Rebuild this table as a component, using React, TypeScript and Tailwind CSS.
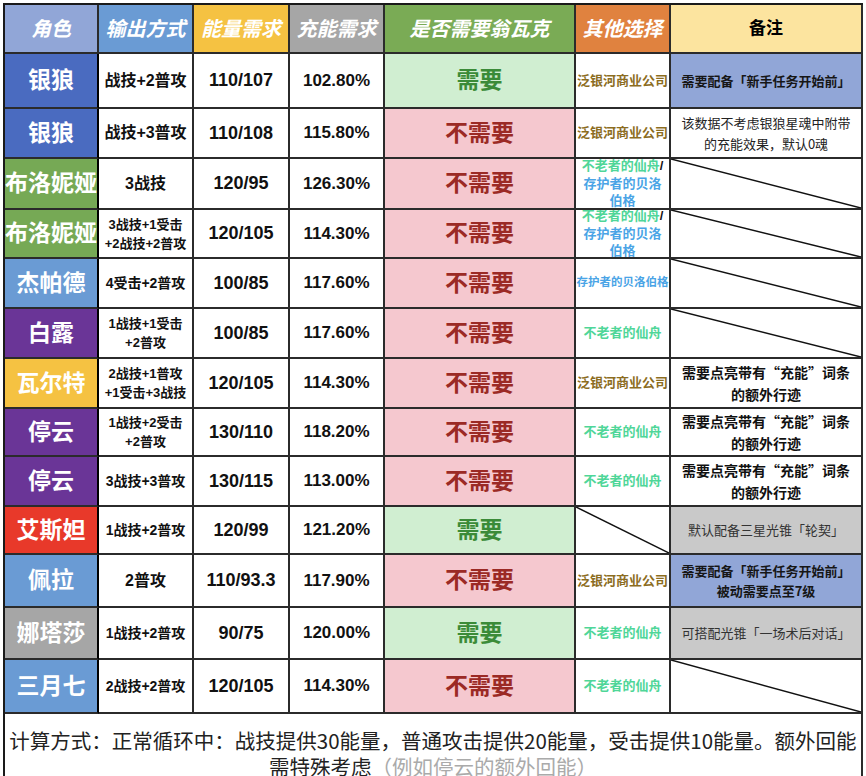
import React from "react";

type Other = { t: string; c: "gold" | "green" | "blue" | "black" }[][];
type Note =
  | { kind: "diag" }
  | { kind: "blue" | "gray" | "plain" | "bold"; lines: string[] };

interface Row {
  name: string;
  color: string;
  out: string[];
  outSize: string;
  energy: string;
  charge: string;
  need: boolean;
  other: Other | null;
  note: Note;
}

const gold = (t: string): Other => [[{ t, c: "gold" }]];
const xianzhou: Other = [[{ t: "不老者的仙舟", c: "green" }]];
const mixed: Other = [
  [
    { t: "不老者的仙舟", c: "green" },
    { t: "/", c: "black" },
  ],
  [{ t: "存护者的贝洛", c: "blue" }],
  [{ t: "伯格", c: "blue" }],
];
const trailblaze: Note = { kind: "bold", lines: ["需要点亮带有“充能”词条", "的额外行迹"] };

const rows: Row[] = [
  { name: "银狼", color: "bg-[#4a6bc0]", out: ["战技+2普攻"], outSize: "text-[16px]", energy: "110/107", charge: "102.80%", need: true, other: gold("泛银河商业公司"), note: { kind: "blue", lines: ["需要配备「新手任务开始前」"] } },
  { name: "银狼", color: "bg-[#4a6bc0]", out: ["战技+3普攻"], outSize: "text-[16px]", energy: "110/108", charge: "115.80%", need: false, other: gold("泛银河商业公司"), note: { kind: "plain", lines: ["该数据不考虑银狼星魂中附带", "的充能效果，默认0魂"] } },
  { name: "布洛妮娅", color: "bg-[#76a955]", out: ["3战技"], outSize: "text-[16px]", energy: "120/95", charge: "126.30%", need: false, other: mixed, note: { kind: "diag" } },
  { name: "布洛妮娅", color: "bg-[#76a955]", out: ["3战技+1受击", "+2战技+2普攻"], outSize: "text-[13px]", energy: "120/105", charge: "114.30%", need: false, other: mixed, note: { kind: "diag" } },
  { name: "杰帕德", color: "bg-[#6a9bd4]", out: ["4受击+2普攻"], outSize: "text-[14px]", energy: "100/85", charge: "117.60%", need: false, other: [[{ t: "存护者的贝洛伯格", c: "blue" }]], note: { kind: "diag" } },
  { name: "白露", color: "bg-[#6a3597]", out: ["1战技+1受击", "+2普攻"], outSize: "text-[13px]", energy: "100/85", charge: "117.60%", need: false, other: xianzhou, note: { kind: "diag" } },
  { name: "瓦尔特", color: "bg-[#f5c242]", out: ["2战技+1普攻", "+1受击+3战技"], outSize: "text-[13px]", energy: "120/105", charge: "114.30%", need: false, other: gold("泛银河商业公司"), note: trailblaze },
  { name: "停云", color: "bg-[#6a3597]", out: ["1战技+2受击", "+2普攻"], outSize: "text-[13px]", energy: "130/110", charge: "118.20%", need: false, other: xianzhou, note: trailblaze },
  { name: "停云", color: "bg-[#6a3597]", out: ["3战技+3普攻"], outSize: "text-[14px]", energy: "130/115", charge: "113.00%", need: false, other: xianzhou, note: trailblaze },
  { name: "艾斯妲", color: "bg-[#e8392a]", out: ["1战技+2普攻"], outSize: "text-[14px]", energy: "120/99", charge: "121.20%", need: true, other: null, note: { kind: "gray", lines: ["默认配备三星光锥「轮契」"] } },
  { name: "佩拉", color: "bg-[#6a9bd4]", out: ["2普攻"], outSize: "text-[16px]", energy: "110/93.3", charge: "117.90%", need: false, other: gold("泛银河商业公司"), note: { kind: "blue", lines: ["需要配备「新手任务开始前」", "被动需要点至7级"] } },
  { name: "娜塔莎", color: "bg-[#a6a6a6]", out: ["1战技+2普攻"], outSize: "text-[14px]", energy: "90/75", charge: "120.00%", need: true, other: xianzhou, note: { kind: "gray", lines: ["可搭配光锥「一场术后对话」"] } },
  { name: "三月七", color: "bg-[#6a9bd4]", out: ["2战技+2普攻"], outSize: "text-[14px]", energy: "120/105", charge: "114.30%", need: false, other: xianzhou, note: { kind: "diag" } },
];

const headers = [
  { label: "角色", cls: "bg-[#91a6d7] text-white italic" },
  { label: "输出方式", cls: "bg-[#6a9bd4] text-white italic" },
  { label: "能量需求", cls: "bg-[#f5c242] text-white italic" },
  { label: "充能需求", cls: "bg-[#a6a6a6] text-white italic" },
  { label: "是否需要翁瓦克", cls: "bg-[#7aab55] text-white italic" },
  { label: "其他选择", cls: "bg-[#e0823f] text-white italic" },
  { label: "备注", cls: "bg-[#fce49f] text-black !text-[17px]" },
];

const colorOf = {
  gold: "text-[#8c6d1f]",
  green: "text-[#4fd698]",
  blue: "text-[#4aa4e6]",
  black: "text-[#111]",
};

const cell = "relative flex items-center justify-center border-r-2 border-b-2 border-[#2b2b2b] overflow-hidden text-center";

const Diagonal = () => (
  <svg className="absolute inset-0 h-full w-full" viewBox="0 0 100 100" preserveAspectRatio="none">
    <line x1="0" y1="0" x2="100" y2="100" stroke="#111" strokeWidth="1.5" vectorEffect="non-scaling-stroke" />
  </svg>
);

const NoteCell = ({ note }: { note: Note }) => {
  if (note.kind === "diag") {
    return (
      <div className={`${cell} bg-white`}>
        <Diagonal />
      </div>
    );
  }
  const styles = {
    blue: "bg-[#91a6d7] text-[#161616] font-bold text-[13px] leading-[20px]",
    gray: "bg-[#c9c9c9] text-[#333] text-[13px] leading-[20px]",
    plain: "bg-white text-[#222] text-[13px] leading-[21px]",
    bold: "bg-white text-[#111] font-bold text-[14px] leading-[22px]",
  }[note.kind];
  return (
    <div className={`${cell} ${styles} flex-col font-['Noto_Sans_CJK_SC',sans-serif]`}>
      {note.lines.map((l) => (
        <span key={l} className="whitespace-nowrap">
          {l}
        </span>
      ))}
    </div>
  );
};

const OtherCell = ({ other }: { other: Other | null }) => {
  if (!other) {
    return (
      <div className={`${cell} bg-white`}>
        <Diagonal />
      </div>
    );
  }
  const small = other.length === 1 && other[0][0].t.length > 7;
  return (
    <div className={`${cell} bg-white flex-col font-bold ${small ? "text-[11.5px]" : "text-[13px]"} leading-[17.5px]`}>
      {other.map((line, i) => (
        <span key={i} className="whitespace-nowrap">
          {line.map((seg) => (
            <span key={seg.t} className={colorOf[seg.c]}>
              {seg.t}
            </span>
          ))}
        </span>
      ))}
    </div>
  );
};

export default function App() {
  return (
    <div className="min-h-[776px] w-[866px] bg-white pl-[3px] pt-[3px] font-['Liberation_Sans','Noto_Sans_CJK_SC',sans-serif]">
      <div className="grid w-[860px] grid-cols-[94px_95px_96px_95px_191px_95px_192px] grid-rows-[49px_55px_50px_51px_49px_50px_50px_50px_48px_50px_48px_53px_52px_54px_63px] border-l-2 border-t-2 border-[#1a1a1a]">
        {headers.map((h) => (
          <div key={h.label} className={`${cell} ${h.cls} text-[20px] font-bold`}>
            {h.label}
          </div>
        ))}

        {rows.map((r, i) => (
          <React.Fragment key={i}>
            <div className={`${cell} ${r.color} border-r-black text-[23px] font-bold text-white whitespace-nowrap`}>
              {r.name}
            </div>
            <div className={`${cell} bg-white flex-col font-bold text-[#111] ${r.outSize} ${r.out.length > 1 ? "leading-[19px]" : ""}`}>
              {r.out.map((l) => (
                <span key={l} className="whitespace-nowrap">
                  {l}
                </span>
              ))}
            </div>
            <div className={`${cell} bg-white text-[18px] font-bold text-[#111]`}>{r.energy}</div>
            <div className={`${cell} bg-white text-[17px] font-bold text-[#111]`}>{r.charge}</div>
            <div
              className={`${cell} text-[23px] font-bold ${
                r.need ? "bg-[#d0eed1] text-[#3b8b38]" : "bg-[#f5c8cf] text-[#9b2a25]"
              }`}
            >
              {r.need ? "需要" : "不需要"}
            </div>
            <OtherCell other={r.other} />
            <NoteCell note={r.note} />
          </React.Fragment>
        ))}

        <div className="col-span-7 border-r-2 border-[#2b2b2b] bg-white pt-[13px] text-center font-['Noto_Sans_CJK_SC',sans-serif] text-[20.5px] leading-[26px] text-[#222]">
          计算方式：正常循环中：战技提供30能量，普通攻击提供20能量，受击提供10能量。额外回能
          <br />
          需特殊考虑<span className="text-[#aaa]">（例如停云的额外回能）</span>
        </div>
      </div>
    </div>
  );
}
